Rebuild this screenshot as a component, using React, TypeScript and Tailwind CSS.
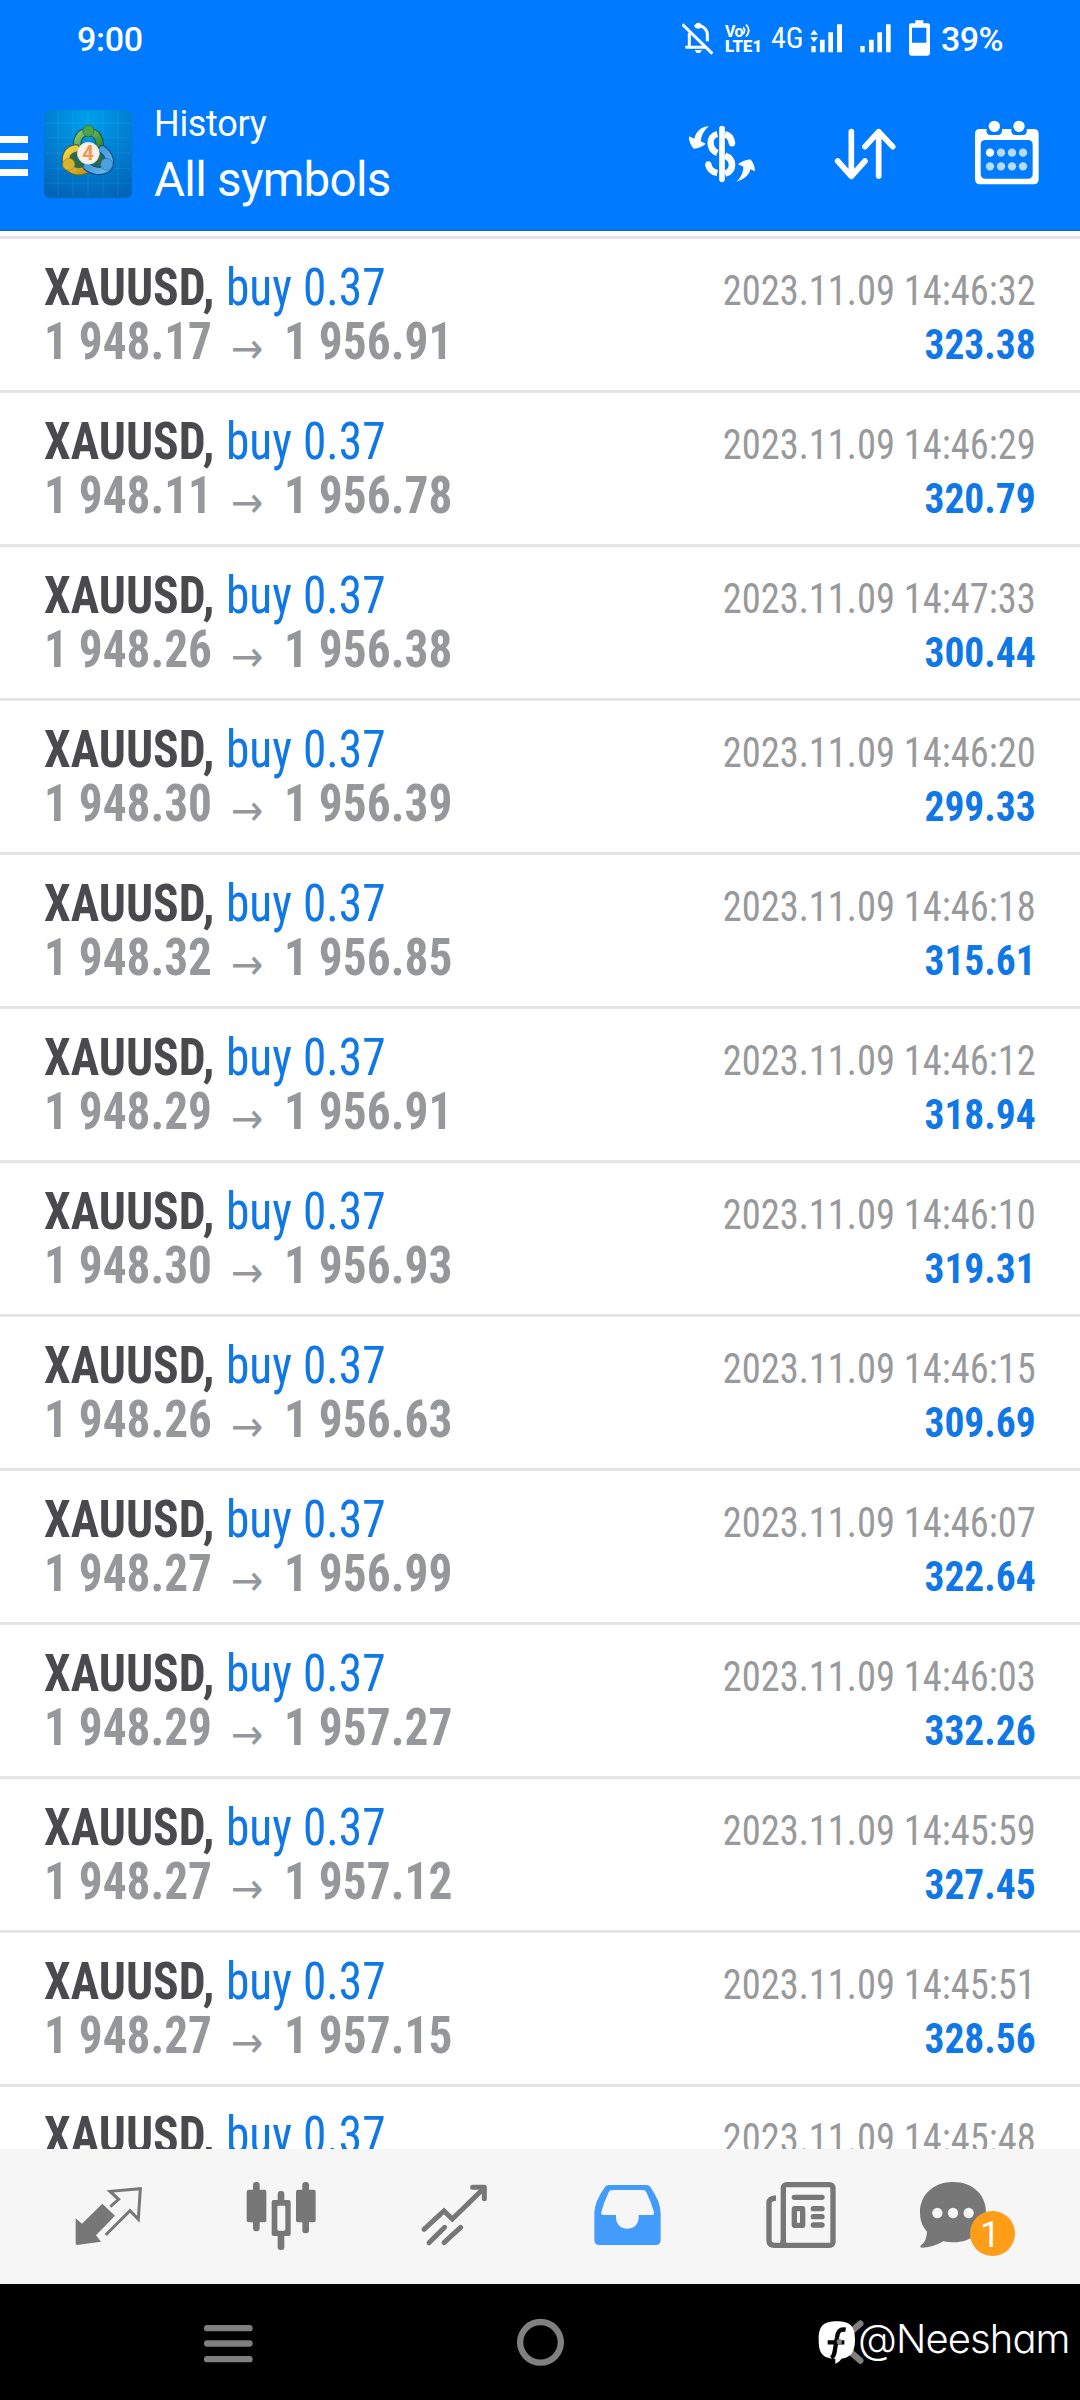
import React from "react";

type Deal = { open: string; close: string; time: string; profit: string };

const deals: Deal[] = [
  { open: "1 948.17", close: "1 956.91", time: "14:46:32", profit: "323.38" },
  { open: "1 948.11", close: "1 956.78", time: "14:46:29", profit: "320.79" },
  { open: "1 948.26", close: "1 956.38", time: "14:47:33", profit: "300.44" },
  { open: "1 948.30", close: "1 956.39", time: "14:46:20", profit: "299.33" },
  { open: "1 948.32", close: "1 956.85", time: "14:46:18", profit: "315.61" },
  { open: "1 948.29", close: "1 956.91", time: "14:46:12", profit: "318.94" },
  { open: "1 948.30", close: "1 956.93", time: "14:46:10", profit: "319.31" },
  { open: "1 948.26", close: "1 956.63", time: "14:46:15", profit: "309.69" },
  { open: "1 948.27", close: "1 956.99", time: "14:46:07", profit: "322.64" },
  { open: "1 948.29", close: "1 957.27", time: "14:46:03", profit: "332.26" },
  { open: "1 948.27", close: "1 957.12", time: "14:45:59", profit: "327.45" },
  { open: "1 948.27", close: "1 957.15", time: "14:45:51", profit: "328.56" },
  { open: "", close: "", time: "14:45:48", profit: "" },
];

function StatusBar() {
  return (
    <div className="flex h-20 items-start pl-[77px] text-white">
      <span className="mt-[19px] w-[605px] text-[34px] leading-[40px] font-medium tracking-[-0.3px]">9:00</span>
      {/* muted bell */}
      <svg className="mt-5 h-9 w-[37px] shrink-0" viewBox="66 60 111 108" fill="none" stroke="#fff" strokeWidth="9">
        <path d="M88 98V142M76 142H135M104 80C122 70 142 86 142 104V124" />
        <circle cx="115" cy="77" r="9" fill="#fff" stroke="none" />
        <path d="M104 150H126L120 159H110Z" fill="#fff" stroke="none" />
        <path d="M67 73L157 161" strokeWidth="9" />
      </svg>
      {/* VoLTE 1 */}
      <div className="ml-[6px] mt-[23px] flex h-8 w-[36px] shrink-0 flex-col">
        <div className="flex h-[15px]">
          <span className="text-[16px] leading-[17px] font-bold tracking-[-0.5px]">Vo</span>
          <svg className="h-[15px] w-[9px]" viewBox="0 0 9 15" fill="none" stroke="#fff" strokeWidth="1.8">
            <path d="M0 4Q3 7.5 0 11M3 1.5Q8.500 7.500 3 13.500" />
          </svg>
        </div>
        <span className="whitespace-nowrap text-[16.500px] leading-[17px] font-black tracking-[0.2px]">LTE1</span>
      </div>
      <span className="ml-[10px] mt-[20px] w-[39px] shrink-0 text-[30px] leading-[36px] [font-stretch:75%]">4G</span>
      {/* SIM 1 signal */}
      <svg className="mt-5 h-9 w-[50px] shrink-0" viewBox="450 60 150 108" fill="#fff">
        <path d="M462 89L474 104H451ZM462 127L474 112H451Z" />
        <path d="M454 138H467V157H454ZM480 119H494V157H480ZM505 97H519V157H505ZM531 73H546V157H531Z" />
      </svg>
      {/* SIM 2 signal */}
      <svg className="mt-5 h-9 w-[48px] shrink-0" viewBox="600 60 144 108" fill="#fff">
        <path d="M601 138H614V157H601ZM627 119H641V157H627ZM652 97H666V157H652ZM678 73H692V157H678Z" />
      </svg>
      {/* battery */}
      <svg className="mt-5 h-9 w-[33px] shrink-0" viewBox="744 60 99 108" fill="#fff">
        <path fillRule="evenodd" d="M766 61H790V70H804Q810 70 810 76V160Q810 167 803 167H754Q747 167 747 160V76Q747 70 753 70H766ZM756 83V128H799V83Z" />
      </svg>
      <span className="mt-[19px] text-[34px] leading-[40px] font-medium tracking-[-0.6px]">39%</span>
    </div>
  );
}

function AppLogo() {
  return (
    <svg className="h-[88px] w-[88px] shrink-0" viewBox="42 46 264 264">
      <defs>
        <radialGradient id="bg" cx="0.5" cy="0.1" r="0.95">
          <stop offset="0" stopColor="#00a0ec" />
          <stop offset="0.5" stopColor="#0180d2" />
          <stop offset="1" stopColor="#0064b8" />
        </radialGradient>
        <linearGradient id="green" x1="0" y1="0" x2="1" y2="1">
          <stop offset="0" stopColor="#8cc878" />
          <stop offset="1" stopColor="#2a8430" />
        </linearGradient>
        <linearGradient id="yellow" x1="0" y1="0" x2="1" y2="1">
          <stop offset="0" stopColor="#f3da4e" />
          <stop offset="1" stopColor="#c4951c" />
        </linearGradient>
        <linearGradient id="blue" x1="0" y1="0" x2="1" y2="1">
          <stop offset="0" stopColor="#2f8ed6" />
          <stop offset="1" stopColor="#6cb8ec" />
        </linearGradient>
      </defs>
      <rect x="42" y="46" width="264" height="264" rx="18" fill="url(#bg)" />
      <path d="M84 50V306M129 50V306M174 50V306M219 50V306M264 50V306M46 85H302M46 129H302M46 175H302M46 221H302M46 265H302" stroke="#6cc8f5" strokeOpacity="0.2" strokeWidth="2" />
      <path d="M135 150L215 150L240 215L180 225L110 215Z" fill="#2a6a4c" />
      <g strokeLinecap="round" fill="none">
        <path d="M142 160C138 132 151 112 175 112C200 112 213 134 208 162" stroke="#135e49" strokeWidth="26" />
        <path d="M142 160C138 132 151 112 175 112C200 112 213 134 208 162" stroke="url(#green)" strokeWidth="19" />
        <path d="M138 161C112 165 103 187 111 211C122 230 145 234 166 226" stroke="#4d6639" strokeWidth="26" />
        <path d="M138 161C112 165 103 187 111 211C122 230 145 234 166 226" stroke="url(#yellow)" strokeWidth="19" />
        <path d="M217 164C240 181 245 205 233 220C213 234 189 230 170 215" stroke="#10508a" strokeWidth="26" />
        <path d="M217 164C240 181 245 205 233 220C213 234 189 230 170 215" stroke="url(#blue)" strokeWidth="19" />
      </g>
      <circle cx="175" cy="109" r="17" fill="#4ea34a" stroke="#226b32" strokeWidth="2" />
      <circle cx="116" cy="209" r="18" fill="#d9b42f" stroke="#9c8a2d" strokeWidth="2" />
      <circle cx="230" cy="209" r="18" fill="#4da2df" stroke="#2472ad" strokeWidth="2" />
      <circle cx="175" cy="176" r="33" fill="#f6f0ea" stroke="#cdd8cc" strokeWidth="2" />
      <text x="174" y="197" textAnchor="middle" fontSize="61" fontWeight="700" fontFamily="Roboto" fill="#ee9850">4</text>
    </svg>
  );
}

function Toolbar() {
  return (
    <div className="flex h-[150px] items-start text-white">
      <div className="mt-[56px] flex w-7 shrink-0 flex-col gap-[9.500px]">
        <div className="h-[7px] bg-white" />
        <div className="h-[7px] bg-white" />
        <div className="h-[7px] bg-white" />
      </div>
      <div className="ml-4 mt-[30px] h-[88px]">
        <AppLogo />
      </div>
      <div className="ml-[22px] mt-[23px] w-[526px] shrink-0">
        <div className="text-[36px] leading-[42px] tracking-[-0.3px]">History</div>
        <div className="mt-[6px] text-[47.500px] leading-[58px] tracking-[-0.7px]">All symbols</div>
      </div>
      {/* currency exchange */}
      <svg className="h-[150px] w-[100px] shrink-0" viewBox="60 240 300 450" fill="none" stroke="#fff">
        <path d="M186 386V538" strokeWidth="17" strokeLinecap="round" />
        <path d="M172 402C144 408 146 448 172 459M144 492Q149 515 172 519" strokeWidth="19" />
        <path d="M195 403Q213 407 216 430M195 467C223 478 223 512 195 521" strokeWidth="20" />
        <circle cx="216" cy="430" r="9.500" fill="#fff" stroke="none" />
        <circle cx="145" cy="493" r="9" fill="#fff" stroke="none" />
        <path d="M146 379C128 380 109 390 103 416L87 409Q86 430 101 446Q122 445 137 431L122 424C124 406 132 391 146 379Z" fill="#fff" stroke="none" />
        <path d="M229 545C248 540 267 528 271 508L285 514Q284 492 271 478Q248 481 234 493L250 500C250 520 241 533 229 545Z" fill="#fff" stroke="none" />
      </svg>
      {/* sort */}
      <svg className="ml-[40px] h-[150px] w-[100px] shrink-0" viewBox="480 240 300 450" fill="none" stroke="#fff" strokeWidth="17" strokeLinecap="round" strokeLinejoin="round">
        <path d="M574 395V528M533 483L574 529L615 483M656 528V396M615 440L656 395L698 440" />
      </svg>
      {/* calendar */}
      <svg className="ml-[40px] h-[150px] w-[100px] shrink-0" viewBox="900 240 300 450" fill="#fff">
        <path fillRule="evenodd" d="M959 387H980Q977 405 992 405H1013Q1028 405 1026 387H1054Q1052 405 1067 405H1088Q1103 405 1100 387H1121Q1136 387 1136 402V538Q1136 553 1121 553H960Q945 553 945 538V402Q945 387 959 387ZM977 420Q962 420 962 435V521Q962 536 977 536H1103Q1118 536 1118 521V435Q1118 420 1103 420Z" />
        <circle cx="1003" cy="379" r="17" />
        <circle cx="1077" cy="379" r="17" />
        <circle cx="990" cy="458" r="12.500" />
        <g fill="#b5dcff">
          <circle cx="1023" cy="458" r="12.500" />
          <circle cx="1056" cy="458" r="12.500" />
          <circle cx="1089" cy="458" r="12.500" />
          <circle cx="990" cy="499" r="12.500" />
          <circle cx="1023" cy="499" r="12.500" />
          <circle cx="1056" cy="499" r="12.500" />
          <circle cx="1089" cy="499" r="12.500" />
        </g>
      </svg>
    </div>
  );
}

function DealRow({ deal }: { deal: Deal }) {
  return (
    <div className="flex h-[154px] shrink-0 justify-between border-b-[3px] border-[#e4e4e5] pl-11 pr-[44px] [font-stretch:75%]">
      <div className="pt-[22px] text-[51px] leading-[54px] whitespace-nowrap">
        <div className="flex text-[#0f77e6]">
          <span className="w-[182px] origin-left scale-x-[0.934] font-bold text-[#4a4a4e]">XAUUSD,</span>
          <span className="origin-left scale-x-[0.929]">buy 0.37</span>
        </div>
        {deal.open && (
          <div className="flex font-bold text-[#96979a]">
            <span className="w-[187px] origin-left scale-x-[0.927]">{deal.open}</span>
            <span className="mt-[6px] h-12 w-[53px] font-['DejaVu_Sans'] text-[43px] font-normal">→</span>
            <span className="origin-left scale-x-[0.929]">{deal.close}</span>
          </div>
        )}
      </div>
      <div className="pt-[25px] text-right text-[42px] leading-[54px] whitespace-nowrap">
        <div className="origin-right scale-x-[0.916] text-[#98999b]">2023.11.09 {deal.time}</div>
        <div className="origin-right scale-x-[0.94] font-bold text-[#0f77e6]">{deal.profit}</div>
      </div>
    </div>
  );
}

function TabBar() {
  return (
    <div className="flex h-[135px] shrink-0 bg-[#f6f6f6] pl-[22px]">
      {/* quotes */}
      <svg className="h-[135px] w-[173px] shrink-0" viewBox="66 207 519 405" fill="none" stroke="#777">
        <path d="M307 371L345 407L288 466L303 485L231 495Q227 494 227 490V415L246 431Z" fill="#777" stroke="none" />
        <path d="M331 380L356 358L330 334L421 326L415 418L390 392L317 465" strokeWidth="9" />
      </svg>
      {/* charts */}
      <svg className="h-[135px] w-[173px] shrink-0" viewBox="585 207 519 405" fill="#777">
        <rect x="759" y="306" width="20" height="148" rx="9" />
        <rect x="740" y="329" width="59" height="98" rx="6" />
        <rect x="907" y="306" width="20" height="154" rx="9" />
        <rect x="888" y="329" width="59" height="98" rx="6" />
        <rect x="833" y="333" width="20" height="40" rx="9" />
        <rect x="833" y="455" width="20" height="55" rx="9" />
        <path fillRule="evenodd" d="M821 360H866Q872 360 872 366V462Q872 468 866 468H821Q815 468 815 462V366Q815 360 821 360ZM836 377Q832 377 832 381V448Q832 452 836 452H852Q856 452 856 448V381Q856 377 852 377Z" />
      </svg>
      {/* trade */}
      <svg className="h-[135px] w-[173px] shrink-0" viewBox="24 207 519 405" fill="none" stroke="#777" strokeWidth="15" strokeLinecap="round">
        <path d="M192 448L252 393L277 417L367 329" />
        <path d="M338 322H373V356" strokeLinejoin="round" />
        <path d="M207 488L254 442M252 488L302 442" />
      </svg>
      {/* history, selected */}
      <svg className="h-[135px] w-[173px] shrink-0" viewBox="543 207 519 405" fill="#439bfb">
        <path fillRule="evenodd" d="M746 315H860Q867 315 871 321Q902 365 902 400V480Q902 495 887 495H718Q703 495 703 480V400Q703 365 735 321Q739 315 746 315ZM758 330Q749 330 746 337Q732 366 724 396Q722 405 730 405H768V412C768 458 836 458 836 412V405H875Q884 405 882 396Q873 366 859 337Q856 330 848 330Z" />
      </svg>
      {/* news */}
      <svg className="h-[135px] w-[173px] shrink-0" viewBox="-18 207 519 405" fill="none" stroke="#777" strokeWidth="16">
        <rect x="190" y="314" width="149" height="182" rx="10" />
        <path d="M168 354Q147 355 147 369V480Q147 496 163 496H200M181 496Q190 494 190 480" />
        <path d="M223 352H306M280 386H306M280 410H306M280 435H306" strokeLinecap="round" />
        <rect x="223" y="386" width="25" height="50" rx="2" />
      </svg>
      {/* messages */}
      <div className="relative h-[135px] w-[173px] shrink-0">
        <svg className="h-[135px] w-[173px]" viewBox="501 207 519 405" fill="#777">
          <path d="M699 306C759 306 798 345 798 396C798 452 757 487 699 487Q684 487 670 484Q638 503 605 503Q598 501 603 496Q620 484 621 455C606 438 600 420 600 396C600 345 640 306 699 306Z" />
          <g fill="#f6f6f6">
            <circle cx="652" cy="399" r="15.500" />
            <circle cx="699" cy="399" r="15.500" />
            <circle cx="746" cy="399" r="15.500" />
          </g>
        </svg>
        <div className="absolute left-[82.5px] top-[62px] flex size-[45px] items-center justify-center rounded-full bg-[#ff9c18] pt-[3px] pr-[4px] text-[36px] leading-none text-white">
          1
        </div>
      </div>
    </div>
  );
}

function SystemBar() {
  return (
    <div className="flex h-[116px] shrink-0 bg-black">
      <svg className="ml-[200px] h-[116px] w-[60px] shrink-0" viewBox="600 612 180 348" fill="#7f7f7f">
        <rect x="612" y="735" width="146" height="19" rx="9.500" />
        <rect x="612" y="781" width="146" height="19" rx="9.500" />
        <rect x="612" y="828" width="146" height="19" rx="9.500" />
      </svg>
      <svg className="ml-[250px] h-[116px] w-[60px] shrink-0" viewBox="450 612 180 348" fill="none" stroke="#808080" strokeWidth="19">
        <circle cx="541.500" cy="787" r="61" />
      </svg>
      {/* back chevron under the signature badge */}
      <svg className="ml-[240px] h-[116px] w-[56px] shrink-0" viewBox="270 612 168 348">
        <path d="M421 731L358 786L421 842" fill="none" stroke="#808080" strokeWidth="19" strokeLinecap="round" />
        <path d="M350 724C390 724 405 738 405 779C405 813 394 832 365 836Q358 846 346 851V836C308 835 296 820 296 779C296 738 310 724 350 724Z" fill="#fff" />
        <path d="M377 749C358 746 353 756 351 772L343 820Q341 829 334 834M323 787H373" fill="none" stroke="#000" strokeWidth="13" />
        <circle cx="358" cy="785" r="8" fill="#808080" />
      </svg>
      <span className="mt-[27px] -ml-[8px] whitespace-nowrap font-['Inter'] text-[40px] leading-[56px] font-light tracking-[-0.9px] text-white [font-feature-settings:'cv11']">@Neesham</span>
    </div>
  );
}

export default function App() {
  return (
    <div className="flex h-[2400px] w-[1080px] flex-col overflow-hidden bg-white font-['Roboto',sans-serif]">
      <header className="h-[231px] shrink-0 border-b border-[#0a63b8] bg-[#007bff]">
        <StatusBar />
        <Toolbar />
      </header>
      <main className="flex h-[1918px] shrink-0 flex-col overflow-hidden">
        <div className="mt-[5px] h-[3px] shrink-0 bg-[#e4e2e5]" />
        {deals.map((deal) => (
          <DealRow key={deal.time} deal={deal} />
        ))}
      </main>
      <TabBar />
      <SystemBar />
    </div>
  );
}
